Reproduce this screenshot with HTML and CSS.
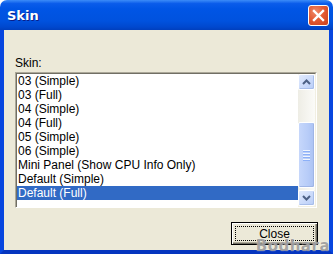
FILE: index.html
```html
<!DOCTYPE html>
<html lang="en">
<head>
    <meta charset="UTF-8">
    <title>Skin</title>
    <link rel="stylesheet" href="styles.css">
</head>
<body>

    <div class="window">
        <div class="titlebar">
            <span class="title">Skin</span>
            <div class="title_close">
                <svg width="13" height="13" viewBox="0 0 13 13">
                    <path d="M2 2 L11 11 M11 2 L2 11" stroke="#fff" stroke-width="2.4" stroke-linecap="square"/>
                </svg>
            </div>
        </div>

        <div class="client">
            <div class="field_label">Skin:</div>

            <div class="listbox">
                <ul class="items">
                    <li>03 (Simple)</li>
                    <li>03 (Full)</li>
                    <li>04 (Simple)</li>
                    <li>04 (Full)</li>
                    <li>05 (Simple)</li>
                    <li>06 (Simple)</li>
                    <li>Mini Panel (Show CPU Info Only)</li>
                    <li>Default (Simple)</li>
                    <li class="selected">Default (Full)</li>
                </ul>

                <!-- xp style scrollbar -->
                <div class="scrollbar">
                    <div class="sb_btn">
                        <svg width="9" height="6" viewBox="0 0 9 6"><path d="M1 5 L4.5 1.5 L8 5" fill="none" stroke="#4D6185" stroke-width="2"/></svg>
                    </div>
                    <div class="sb_track">
                        <div class="sb_thumb">
                            <span class="grip"></span>
                            <span class="grip"></span>
                            <span class="grip"></span>
                            <span class="grip"></span>
                        </div>
                    </div>
                    <div class="sb_btn">
                        <svg width="9" height="6" viewBox="0 0 9 6"><path d="M1 1 L4.5 4.5 L8 1" fill="none" stroke="#4D6185" stroke-width="2"/></svg>
                    </div>
                </div>
            </div>

            <div class="actions">
                <button class="close_btn"><span class="focus_rect">Close</span></button>
            </div>
        </div>

        <div class="watermark">Bodhara</div>
    </div>

</body>
</html>
```

FILE: styles.css
```css
body {
    margin: 0;
    background: #fff;
    font-family: "Liberation Sans", Arial, sans-serif;
}

.window {
    position: relative;
    width: 333px;
    height: 254px;
    display: flex;
    flex-direction: column;
}

/* Title bar */
.titlebar {
    height: 30px;
    display: flex;
    align-items: center;
    justify-content: space-between;
    padding: 0 7px 0 7px;
    box-sizing: border-box;
    border-radius: 7px 7px 0 0;
    background: linear-gradient(to bottom, #3C8CF8 0%, #0A5CEA 12%, #0055E5 30%, #0052DE 70%, #0048CE 90%, #003FBD 100%);
}

.title {
    color: #fff;
    font-family: "DejaVu Sans", sans-serif;
    font-weight: bold;
    font-size: 13px;
    text-shadow: 1px 1px #0A1E8A;
    margin-top: 1px;
}

.title_close {
    width: 19px;
    height: 19px;
    border: 1px solid #fff;
    border-radius: 3px;
    margin-right: -3px;
    display: flex;
    align-items: center;
    justify-content: center;
    background: radial-gradient(circle at 35% 30%, #F08A6A 0%, #E35B34 45%, #C9401C 100%);
}

/* Client area */
.client {
    flex: 1;
    background: #ECE9D8;
    border-left: 4px solid #0746DF;
    border-right: 4px solid #0746DF;
    border-bottom: 4px solid #0535BF;
    padding: 26px 11px 0 11px;
    display: flex;
    flex-direction: column;
    font-size: 12px;
    color: #000;
}

.field_label {
    height: 14px;
    line-height: 14px;
    margin-bottom: 2px;
}

.listbox {
    width: 302px;
    height: 136px;
    box-sizing: border-box;
    border-top: 1px solid #ACA899;
    border-left: 1px solid #ACA899;
    border-bottom: 1px solid #fff;
    border-right: 1px solid #fff;
    display: flex;
}

.items {
    flex: 1;
    margin: 0;
    padding: 0;
    list-style: none;
    background: #fff;
    border-top: 1px solid #716F64;
    border-left: 1px solid #716F64;
}

.items li {
    height: 14px;
    line-height: 14px;
    padding-left: 1px;
    white-space: nowrap;
}

.items .selected {
    background: #316AC5;
    color: #fff;
}

.scrollbar {
    width: 17px;
    display: flex;
    flex-direction: column;
    background: #F7F6F0;
    border-top: 1px solid #716F64;
    border-right: 1px solid #F1EFE2;
    border-bottom: 1px solid #F1EFE2;
}

.sb_btn {
    height: 16px;
    box-sizing: border-box;
    border: 1px solid #fff;
    border-radius: 2px;
    background: linear-gradient(to bottom right, #E2EBFD, #B8CDF8);
    box-shadow: inset -1px -1px 0 #A8BEEA;
    display: flex;
    align-items: center;
    justify-content: center;
}

.sb_track {
    flex: 1;
    display: flex;
    flex-direction: column;
    background: linear-gradient(to right, #EEEDE5, #FBFBF8);
}

.sb_thumb {
    margin-top: 32px;
    height: 66px;
    box-sizing: border-box;
    border: 1px solid #fff;
    border-radius: 2px;
    background: linear-gradient(to right, #C6D7FB, #B7CCF8 60%, #ABC2F3);
    box-shadow: inset -1px -1px 0 #9FB5E6;
    display: flex;
    flex-direction: column;
    align-items: center;
    justify-content: center;
    gap: 1px;
}

.grip {
    width: 7px;
    height: 1px;
    background: #EEF4FE;
    border-bottom: 1px solid #8CB0F8;
}

.actions {
    display: flex;
    justify-content: flex-end;
    margin-top: 14px;
}

.close_btn {
    width: 87px;
    height: 23px;
    padding: 0;
    border: 1px solid #000;
    background: #ECE9D8;
    box-shadow: inset 1px 1px 0 #fff, inset -1px -1px 0 #716F64, inset -2px -2px 0 #ACA899;
    font-family: "Liberation Sans", Arial, sans-serif;
    font-size: 12px;
    color: #000;
    display: flex;
    align-items: stretch;
    justify-content: stretch;
}

.focus_rect {
    flex: 1;
    margin: 3px;
    border: 1px dotted #000;
    display: flex;
    align-items: center;
    justify-content: center;
}

/* site watermark over the corner */
.watermark {
    position: absolute;
    right: 3px;
    bottom: 0;
    line-height: 16px;
    font-family: "DejaVu Sans", sans-serif;
    font-weight: bold;
    font-size: 15px;
    color: rgba(105, 105, 105, 0.6);
    text-shadow: 0 0 1px rgba(255, 255, 255, 0.9);
    letter-spacing: 0.5px;
}
```
